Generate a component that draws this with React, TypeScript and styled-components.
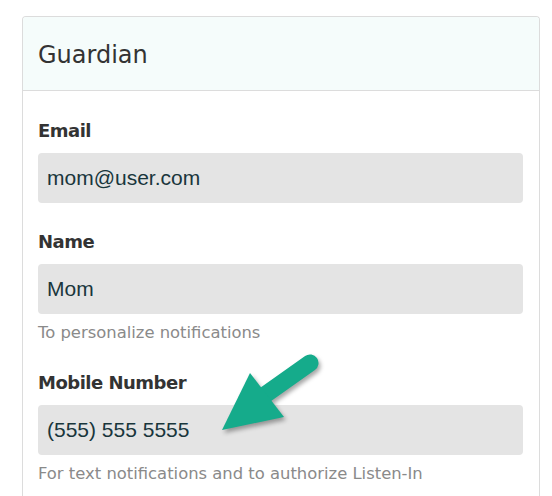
import styled, { createGlobalStyle } from "styled-components";

const GlobalStyle = createGlobalStyle`
  html, body {
    margin: 0;
    padding: 0;
    background: #ffffff;
    overflow: hidden;
  }
`;

const Page = styled.div`
  position: relative;
  box-sizing: border-box;
  height: 496px;
  padding: 16px 0 0 22px;
  overflow: hidden;
`;

const Card = styled.section`
  width: 518px;
  box-sizing: border-box;
  border: 1px solid #dcdcdc;
  border-bottom: none;
  border-radius: 4px 4px 0 0;
  background: #ffffff;
  height: 480px;
  overflow: hidden;
`;

const CardHeader = styled.header`
  background: #f5fcfb;
  border-bottom: 1px solid #dcdcdc;
  padding: 20px 15px 17px;
  font-family: "DejaVu Sans", Verdana, sans-serif;
  font-size: 24px;
  line-height: 36px;
  color: #333333;
`;

const CardBody = styled.div`
  padding: 26px 15px 0 15px;
`;

const Field = styled.div`
  margin-bottom: 25px;
`;

const Label = styled.label`
  display: block;
  margin-bottom: 9px;
  font-family: "DejaVu Sans", Verdana, sans-serif;
  font-size: 18px;
  font-weight: 700;
  letter-spacing: -0.5px;
  line-height: 27px;
  color: #333333;
`;

const Input = styled.div`
  display: flex;
  align-items: center;
  height: 50px;
  margin-right: 1px;
  box-sizing: border-box;
  padding: 0 9px;
  border-radius: 4px;
  background: #e4e4e4;
  font-family: "Liberation Sans", Arial, sans-serif;
  font-size: 21px;
  color: #19363c;
`;

const Help = styled.p`
  margin: 8px 0 0;
  font-family: "DejaVu Sans", Verdana, sans-serif;
  font-size: 16.4px;
  line-height: 22px;
  color: #8a8a8a;
`;

const Arrow = styled.svg`
  position: absolute;
  left: 0;
  top: 0;
  pointer-events: none;
  filter: drop-shadow(2px 3px 2px rgba(0, 0, 0, 0.35));
`;

const fields = [
  { label: "Email", value: "mom@user.com" },
  { label: "Name", value: "Mom", help: "To personalize notifications" },
  {
    label: "Mobile Number",
    value: "(555) 555 5555",
    help: "For text notifications and to authorize Listen-In",
  },
];

export default function App() {
  return (
    <Page>
      <GlobalStyle />
      <Card>
        <CardHeader>Guardian</CardHeader>
        <CardBody>
          {fields.map((f) => (
            <Field key={f.label}>
              <Label>{f.label}</Label>
              <Input>{f.value}</Input>
              {f.help && <Help>{f.help}</Help>}
            </Field>
          ))}
        </CardBody>
      </Card>
      <Arrow width="552" height="496" viewBox="0 0 552 496">
        <line
          x1="310"
          y1="363"
          x2="262"
          y2="397"
          stroke="#15ab8b"
          strokeWidth="17"
          strokeLinecap="round"
        />
        <polygon points="250,373 222,430 284,417" fill="#15ab8b" />
      </Arrow>
    </Page>
  );
}
